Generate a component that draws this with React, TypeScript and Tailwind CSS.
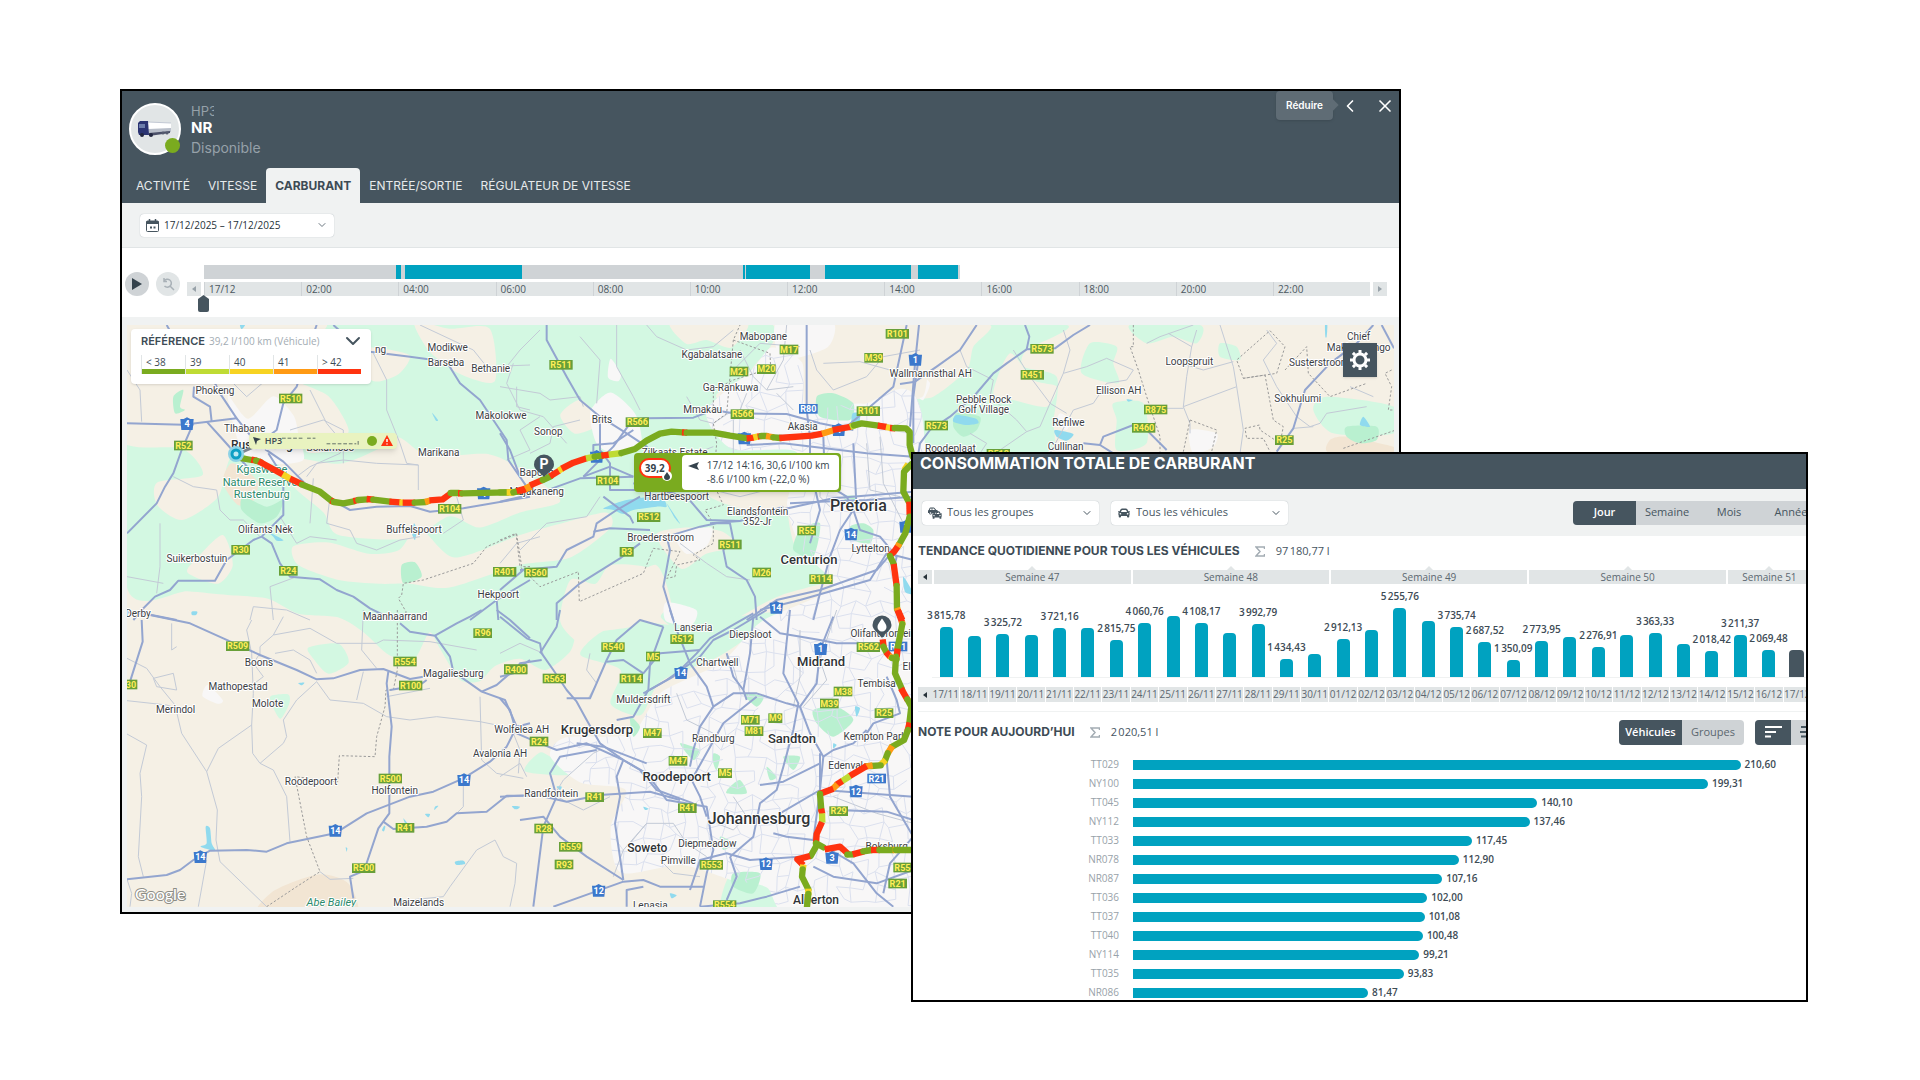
import React from "react";
import { ChevronDown, ChevronLeft, X } from "lucide-react";
import { FaCar, FaCarSide } from "react-icons/fa";

/* ------------------------------------------------------------------ map */

type Pt = string;
type Label = [string, number, number, ("s" | "m" | "l" | "xl" | "park")?];
type Shield = [string, number, number, ("g" | "b" | "n")?];
type Seg = ["g" | "r" | "y" | "o" | "l", Pt];

type Tile = {
  x: number;
  y: number;
  parks: Pt[];
  water: Pt[];
  minor: Pt[];
  border: Pt[];
  major: Pt[];
  route: Seg[];
  labels: Label[];
  shields: Shield[];
};

const routeColor = { g: "#7aab1f", r: "#ff330f", y: "#f7d322", o: "#ff9a14", l: "#bfdb34" };

/* Land cover west of Pretoria, in its own coarse grid. */
const west = {
  place: "translate(127 325) scale(0.5038 0.375)",
  green: [
    "0,100 60,60 200,160 380,30 400,-20 1240,-20 1240,120 1180,200 1580,240 1580,330 1330,340 1330,600 1500,640 1300,720 1200,790 1120,830 1060,780 1080,740 1050,640 980,700 900,800 880,870 830,920 780,890 730,910 700,950 660,945 620,860 600,820 570,890 520,880 470,820 420,780 340,770 280,730 200,720 120,710 0,700",
    "900,880 940,820 1010,790 1090,800 1200,780 1290,770 1180,880 1060,950 1020,1040 960,1010 980,920",
    "1330,950 1400,930 1460,980 1480,1050 1420,1080 1350,1060",
    "820,1140 860,1160 950,1130 960,1170 880,1200 790,1190",
    "1200,1460 1290,1440 1320,1470 1290,1580 1180,1580",
    "285,990 320,985 322,1010 305,1050 290,1020",
    "360,860 420,850 440,900 400,930 370,890",
    "1490,1470 1560,1450 1580,1500 1520,1520",
  ],
  beige: [
    "-20,-20 380,-20 360,60 330,140 400,190 440,280 410,330 360,340 330,290 230,300 200,370 180,460 110,520 60,480 60,420 150,400 110,330 -20,300",
    "300,350 420,370 500,330 540,300 600,350 720,345 800,400 860,470 780,500 700,540 640,510 560,570 420,560 390,500 330,430",
    "330,590 400,580 480,610 540,600 580,540 650,620 780,560 860,530 950,500 960,540 880,620 780,640 640,700 560,690 500,690 420,680 340,640",
    "570,-10 640,10 720,10 730,150 660,130 600,70",
    "1390,30 1470,10 1580,-10 1580,190 1480,150 1440,210 1390,190 1370,120",
    "1080,-10 1230,-10 1200,60 1150,40 1110,50",
    "880,680 930,690 960,640 1040,650 1060,720 1010,740 1010,800 930,820 900,850 860,790",
    "1050,560 1110,540 1180,550 1210,590 1150,610 1100,650",
    "1150,450 1220,410 1310,420 1320,500 1220,490",
    "440,90 480,60 560,80 540,130 490,150",
    "140,620 190,560 210,640 180,690 120,660",
    "860,240 900,200 940,260 890,290",
  ],
  urban: [
    "1240,120 1280,60 1340,100 1350,220 1460,210 1580,260 1580,1580 1320,1580 1270,1500 1200,1480 1100,1440 980,1460 960,1340 990,1240 900,1220 840,1150 870,1100 1000,1090 1060,980 1180,900 1260,790 1400,700 1340,600 1310,480 1330,340 1200,330 1150,230",
    "200,190 240,250 290,190 330,240 340,290 350,360 290,370 230,340",
    "920,230 960,180 1010,240 1020,330 960,340 930,310",
    "1290,-10 1400,-10 1390,60 1300,90",
    "1090,560 1160,540 1150,590 1110,610",
    "1070,740 1130,760 1120,800 1070,790",
    "960,90 980,130 975,150 955,140",
    "160,960 190,1000 180,1010 150,990",
  ],
  tan: ["205,370 230,380 260,420 250,470 220,480 190,420", "260,1580 290,1510 380,1465 440,1490 450,1580"],
};

/* Land cover east of Pretoria. */
const east = {
  place: "translate(900 310) scale(0.3333)",
  green: [
    "60,45 500,45 380,120 370,170 470,200 460,330 430,430 0,430 0,280 100,260 200,180 220,110 270,45",
    "570,100 650,110 640,160 655,220 545,190",
    "640,280 730,280 740,400 650,420 650,330",
    "690,45 900,45 890,100 820,80 740,100",
    "960,100 1010,110 1020,150 960,140",
    "1240,300 1280,260 1482,290 1482,370 1300,370",
  ],
  beige: ["330,130 400,210 470,230 440,290 340,270 280,250", "70,60 200,60 210,110 160,150 100,190 60,160"],
  urban: ["60,200 90,220 70,270 50,250", "870,360 950,370 940,410 880,430", "480,310 510,330 500,360 470,340", "0,100 40,100 30,280 0,280"],
  tan: ["1290,390 1340,380 1480,410 1482,430 1290,430"],
};

/* Each tile is drawn at three units per pixel from its own origin. */
const tiles: Tile[] = [
  {
    x: 110,
    y: 310,
    parks: ["400,560 470,590 520,570 500,620 450,640 395,600", "875,765 915,757 935,800 880,820", "190,260 220,240 210,290 225,300 195,310"],
    water: ["475,665 520,690 500,692 490,680", "912,640 920,660 915,690 906,670", "390,45 405,45 395,58", "966,308 984,330 978,332", "245,905 262,905 258,915 246,915"],
    minor: [
      "330,180 410,260 480,200 520,150 560,220",
      "790,130 830,210 830,300 870,400 890,460 925,465 925,540",
      "51,180 90,240 95,335",
      "190,500 250,530 320,540 330,600 360,630 400,630 450,680",
      "600,240 650,340 700,400 690,430 600,470 560,500",
      "930,45 1090,120 1130,170 1260,165",
      "925,465 800,460 700,450 620,460 590,500",
      "660,560 650,640 720,660 740,700 800,720 870,690 930,680",
      "510,620 560,700 600,680 680,690",
      "150,640 150,770 140,850",
      "560,800 480,830 490,930",
      "1220,230 1220,290 1260,300",
      "1040,560 1060,630 1000,670",
      "420,930 430,890 530,900 600,930",
      "540,360 640,330 700,360 700,460",
      "610,505 600,640",
      "51,800 160,820",
    ],
    border: ["1260,770 1235,770 1220,672 1130,710 1090,760 1030,780 940,810 880,820 875,855 865,865 888,905 885,930"],
    major: [
      "170,45 190,80 215,110",
      "670,45 720,90 780,125 900,140 1010,155",
      "620,45 590,130 560,230 520,280 500,360 460,390 430,410",
      "252,230 250,260 300,290 305,335",
      "51,340 220,344 380,325 330,250 310,210",
      "290,335 340,390 420,480",
      "380,325 440,400 520,455 585,520 665,570 720,600 800,590 900,588 960,605 1060,595 1260,560",
      "475,430 520,500 520,615 455,680 430,690 390,720 350,750 315,812 205,812 180,840 135,860 95,900 70,930",
      "250,340 215,420 190,490 165,530 140,580 51,670",
      "455,680 485,700 510,760 540,800 630,808 680,840 730,860 780,895 850,930",
      "1010,155 1050,220 1110,270 1150,330 1190,390 1195,450 1250,530",
      "1260,810 1160,870 1080,930",
      "1160,870 1165,930",
      "51,907 110,912 200,930",
    ],
    route: [
      ["g", "385,443 425,450"], ["r", "424,449 440,452"], ["g", "438,452 452,456"], ["r", "446,454 520,494"], ["y", "518,493 542,507"],
      ["r", "540,506 578,524"], ["g", "576,524 630,545 665,573"], ["r", "662,571 672,576"], ["g", "672,576 700,580 732,574"], ["r", "730,573 746,570"],
      ["g", "745,570 772,568"], ["r", "770,567 792,569"], ["g", "790,569 840,575"], ["r", "838,575 872,577"], ["y", "868,577 880,578"], ["r", "878,578 916,578"],
      ["g", "914,578 948,576"], ["o", "945,576 960,572"], ["r", "958,571 998,568 1024,549"], ["g", "1022,549 1046,549"], ["r", "1044,550 1058,550"],
      ["g", "1057,550 1192,547"], ["y", "1190,547 1207,547"], ["g", "1205,547 1226,544"], ["r", "1224,544 1246,538"], ["o", "1245,538 1264,530"],
    ],
    labels: [
      ["ng", 812, 130], ["Modikwe", 1013, 122], ["Barseba", 1008, 168], ["Bethanie", 1142, 187], ["Phokeng", 315, 251], ["Tlhabane", 404, 366],
      ["Makolokwe", 1173, 328], ["Rustenburg", 456, 418, "m"], ["Bokamoso", 661, 422], ["Marikana", 986, 438], ["Kgaswane", 456, 490, "park"],
      ["Nature Reserve", 450, 527, "park"], ["Rustenburg", 455, 563, "park"], ["Olifants Nek", 466, 670], ["Buffelspoort", 912, 670],
      ["Suikerbostuin", 261, 757], ["Hekpoort", 1165, 863], ["Maanhaarrand", 855, 929], ["Derby", 84, 922],
    ],
    shields: [["R510", 542, 266], ["R52", 220, 407], ["4", 231, 342, "n"], ["R104", 1019, 597], ["R30", 392, 720], ["R24", 535, 783], ["R401", 1184, 786], ["4", 1121, 550, "n"]],
  },
  {
    x: 500,
    y: 310,
    parks: ["1090,640 1120,660 1110,700 1060,690 1050,650", "900,660 960,640 940,740 880,720", "1030,560 1070,560 1060,600", "950,260 1000,250 1060,280 1050,330 960,320"],
    water: ["310,595 380,570 480,560 500,590 470,590 400,600 370,612 340,600", "500,580 540,640 525,625", "1058,310 1080,312 1075,350 1055,340", "1210,800 1240,850 1215,845"],
    minor: [
      "0,230 60,240 120,250 150,270 240,260 250,290", "40,160 20,220 60,300 130,320 200,400", "350,45 350,170 400,260 420,300", "240,80 300,150 290,280",
      "440,45 470,80 560,120 640,110 700,60", "930,120 950,180 1000,240 1100,200 1150,140 1260,120", "970,160 1080,155 1170,180",
      "560,260 600,330 640,340 700,300", "830,250 880,300", "120,60 60,120 20,170", "300,560 260,620 140,640 60,720", "0,760 50,700 120,680",
      "640,540 720,560 880,520", "540,700 620,760 680,800 750,810", "700,330 700,430 640,470", "860,45 850,150 800,240", "600,560 570,500 560,440 640,410",
      "120,320 60,360 90,420 20,450", "240,330 160,350 150,400 90,430", "720,120 760,200 800,240 880,230", "700,180 780,100 900,110", "740,250 720,300",
      "960,440 960,560 1000,600", "1100,400 1110,540 1200,560", "1140,380 1150,520 1210,640",
    ],
    border: [
      "0,690 48,670 60,770 120,830 235,785 238,875 430,790 460,715 540,725 500,805 525,800 530,765 600,750 580,735 640,700 640,640 615,600 670,585 640,520 650,400 640,340 680,310 700,90 720,45",
      "700,90 810,130 812,175 700,210 640,240 640,310",
    ],
    major: [
      "140,45 140,90 200,200 240,270 300,320 380,370 440,410 560,530",
      "300,320 300,420 330,460 330,540 420,540",
      "250,500 340,410 390,340 430,325 580,323 640,300 700,310 860,312 960,340 1060,360",
      "920,45 920,300 930,380 930,470 960,600 930,700",
      "1220,45 1180,230 1110,290 1040,350 1000,370",
      "1255,150 1240,260 1240,400",
      "0,575 130,545 240,505 400,500",
      "280,430 280,405 340,400 400,360",
      "400,520 560,560 620,630 720,633",
      "740,405 850,400 1100,430 1240,440",
      "420,560 350,600 290,640 280,680 200,720 170,770 60,780",
      "0,840 70,780",
      "870,580 960,575 1100,570 1240,560",
      "850,598 1000,565 1240,545",
      "630,640 720,633 850,590",
      "520,930 490,830 510,720 500,680 600,650 650,640 690,640 700,690 670,720 680,770 740,810 765,860 770,930",
      "1060,600 1020,660 990,740 960,850 940,930",
      "1060,600 1080,660 1140,680 1190,740 1180,780",
      "1060,400 1070,600",
      "1235,600 1200,700 1130,780 960,840 830,870 740,930",
      "170,930 170,880 240,820 360,745 420,700",
      "0,370 30,420 60,500",
      "1240,750 1160,730 1110,810 900,870 780,900",
      "310,560 390,620 400,640",
      "450,660 330,655 280,665",
      "970,380 975,520 1040,560 1060,600",
      "400,500 330,470 250,500",
    ],
    route: [
      ["g", "0,547 25,547"], ["y", "20,547 42,547"], ["g", "40,547 52,545"], ["r", "50,543 78,536"], ["o", "76,536 92,527"], ["r", "90,526 130,509"], ["g", "128,510 152,499"],
      ["r", "150,499 178,482"], ["y", "176,482 188,475"], ["r", "185,476 220,458 260,445"], ["l", "258,445 285,440"], ["g", "284,440 306,437"], ["r", "304,437 328,434"],
      ["l", "326,434 366,429"], ["g", "364,429 405,417 440,392 480,371 515,365 548,367"], ["r", "546,367 562,368"], ["g", "560,368 640,368 690,377 742,385"], ["r", "740,385 762,383"],
      ["y", "760,383 775,379"], ["r", "773,380 785,378"], ["g", "784,378 800,378"], ["o", "798,378 822,382"], ["g", "820,382 842,384"], ["r", "838,384 935,377 968,371"], ["o", "966,371 1000,361"],
      ["r", "998,360 1055,350"], ["l", "1050,351 1066,345"], ["g", "1062,346 1085,340 1135,347"], ["r", "1133,347 1160,351"], ["y", "1158,351 1172,354"], ["r", "1170,354 1186,355"],
      ["g", "1184,354 1218,355 1229,366 1229,405 1238,440"], ["y", "1225,462 1213,480"], ["g", "1235,462 1212,485 1210,545 1226,575"], ["r", "1228,575 1229,615"], ["g", "1229,620 1216,670 1196,706"],
      ["o", "1198,700 1192,712"], ["r", "1193,710 1183,724 1168,738"], ["g", "1170,738 1181,762"], ["r", "1181,762 1190,828"], ["g", "1190,828 1191,897"], ["o", "1191,893 1195,905"], ["r", "1194,902 1207,930"],
    ],
    labels: [
      ["Mabopane", 790, 91], ["Kgabalatsane", 636, 143], ["Ga-Rankuwa", 692, 243], ["Mmakau", 608, 310], ["Brits", 306, 338], ["Sonop", 145, 375], ["Akasia", 908, 361],
      ["Zilkaats Estate", 524, 439], ["Bapong", 110, 498], ["Majakaneng", 110, 556], ["Hartbeespoort", 530, 570], ["Elandsfontein", 773, 614], ["352-Jr", 772, 645],
      ["Broederstroom", 482, 693], ["Pretoria", 1075, 604, "xl"], ["Centurion", 927, 763, "l"], ["Lyttelton", 1112, 727],
    ],
    shields: [
      ["R101", 1192, 72], ["R511", 183, 165], ["M17", 867, 119], ["M39", 1121, 144], ["M21", 717, 185], ["M20", 799, 178], ["R566", 727, 313], ["R566", 412, 337], ["R80", 925, 297, "b"], ["R101", 1105, 304],
      ["R104", 323, 512], ["R512", 446, 622], ["R55", 920, 662], ["R511", 690, 704], ["R3", 380, 726], ["R560", 108, 788], ["M26", 785, 788], ["R114", 963, 808], ["14", 1053, 673, "n"], ["14", 829, 893, "n"],
      ["4", 733, 385, "n"], ["4", 290, 440, "n"], ["1", 1218, 650, "n"], ["4", 1016, 360, "n"],
    ],
  },
  {
    x: 110,
    y: 610,
    parks: [],
    water: ["287,650 300,655 305,700 315,722 272,710 290,700", "1035,755 1060,752 1065,762 1040,765", "945,612 960,612 955,622", "1206,588 1226,590 1215,598", "822,648 826,650 822,664 816,660", "565,220 583,218 575,226", "975,590 985,588 973,600", "880,625 892,640 886,642", "707,712 712,715 710,725"],
    minor: [
      "51,145 110,175 150,230 195,285 215,370 290,485 322,600 318,690 330,755 470,890", "290,485 325,415 425,345 430,250 425,130 410,60 425,30", "425,345 428,430 450,460 490,480 530,560 540,695",
      "450,460 520,400 530,380 520,330 560,270 620,215", "51,272 170,285 215,300", "185,40 185,120 200,110", "51,372 110,405 90,490 95,560 85,740 100,800", "51,808 65,850 60,890", "290,750 265,890",
      "450,140 450,110 490,75 520,20", "490,75 600,55 680,100 800,100 820,90 960,95 1100,120", "760,0 755,120 800,175", "620,215 660,270 760,280 830,320 900,330 980,320 1110,335 1210,355",
      "760,185 740,270", "830,260 960,235", "495,130 550,120 600,150 620,190", "1110,260 1115,450 1160,490 1240,505", "1210,370 1230,420 1225,490", "1060,520 1060,590 1040,610", "1155,690 1180,740 1220,760 1215,820 1200,890", "1155,690 1100,720 1020,830 1000,860 900,870", "630,785 660,808 730,805",
      "130,205 190,190 200,240 140,230 130,205", "450,130 430,160 460,200 420,230",
    ],
    border: ["862,0 862,180 850,240 828,240 825,290 800,380 795,440 688,437 683,515 555,500 590,680 630,785 560,830 470,890"],
    major: [
      "120,15 240,40 340,85 450,135 560,180 620,208 670,205 750,180 820,177 900,207 940,200", "95,30 98,95 60,215", "835,185 830,220 845,350 838,440 838,610 805,655 768,765", "768,780 720,800 730,865",
      "840,240 930,225 950,210", "870,40 900,65 975,77 1020,140 1030,185 1115,245 1185,270 1220,350", "975,77 1040,40 1080,20 1115,0", "1160,0 1200,30 1260,85", "1115,245 1160,225 1200,190 1260,150",
      "1220,350 1190,410 1140,455 1060,505 970,545 900,560 770,610 675,670 530,700 470,725 410,720 300,722 250,750 210,780 170,795 51,808",
      "820,635 850,657 950,650 1010,635 1040,610 1130,605 1190,557 1240,557", "1220,350 1260,340",
    ],
    route: [],
    labels: [
      ["Boons", 447, 169], ["Mathopestad", 384, 241], ["Molote", 473, 290], ["Merindol", 197, 310], ["Magaliesburg", 1030, 200], ["Roodepoort", 603, 524], ["Holfontein", 854, 552],
      ["Avalonia AH", 1170, 442], ["Abe Bailey", 664, 888, "park"], ["Maizelands", 926, 889],
    ],
    shields: [["R509", 383, 109], ["R96", 1118, 70], ["R554", 885, 155], ["R400", 1217, 178], ["R100", 902, 227], ["R500", 841, 506], ["R41", 885, 654], ["R500", 761, 775], ["R30", 54, 224], ["14", 1062, 510, "n"], ["14", 676, 662, "n"], ["14", 271, 741, "n"]],
  },
  {
    x: 500,
    y: 610,
    parks: ["700,790 780,790 760,850 700,830", "940,300 1010,290 1060,330 1000,380 950,340", "640,430 660,440 650,480 640,460", "850,440 900,440 880,480", "690,530 720,510 740,550 680,550", "800,470 830,500 810,510", "540,400 600,420 580,450", "390,320 420,350 400,380", "660,680 700,700 670,720", "730,250 790,260 770,290"],
    water: ["1065,290 1080,295 1070,320", "430,590 446,596 436,600", "510,850 530,856 515,865", "40,588 60,590 50,598", "1000,400 1010,405 1000,415", "170,530 185,530 180,540"],
    minor: [
      "0,130 60,100 130,130", "270,130 260,180 290,220 265,265", "80,500 60,460 0,500", "160,560 190,510 280,430 300,420", "530,250 560,330 640,370", "720,240 700,170 680,130", "900,60 900,200 880,290",
      "1010,0 960,150 980,210 910,290", "330,560 250,600 170,560", "600,760 570,840", "440,640 370,720 340,800", "1000,560 1130,610 1240,640",
      "390,700 440,640 520,640 560,700 620,740", "480,750 520,790 600,800", "700,560 740,620 700,660 650,640",
    ],
    border: [],
    major: [
      "0,20 80,85 120,100 125,130 160,180 200,240 230,275 260,330 300,400 370,450 440,490 500,570 620,590 640,720 620,790 600,890",
      "180,0 170,50 120,130", "0,200 40,190 60,160 125,150", "0,265 30,300 50,370", "510,0 530,60 570,160 620,230 640,290 600,350 580,420 570,470",
      "490,50 420,30 350,90 320,150 270,265 200,265", "490,50 450,160 445,240 400,320 350,330", "370,450 350,500 360,560 345,640 370,810", "320,155 370,150 430,190 480,130 600,120",
      "800,0 700,60 640,90 600,140 500,210 440,245", "760,10 690,50 630,85 590,130 520,200 430,250", "570,500 600,560 620,620", "640,290 700,250 770,250 860,280 900,290 950,220 960,120 1000,20",
      "870,0 850,190 895,280 880,360 850,470 830,540 780,580 760,680 690,740", "960,430 960,540 940,690", "900,290 930,370 970,440 960,540 840,610",
      "580,500 670,340 770,260", "50,370 120,400 170,420 260,400 370,450 420,480 470,540 580,580", "230,400 310,410 440,460", "0,560 110,555 200,575 300,555 450,545 540,570", "160,890 370,815 430,810 480,830 610,830",
      "380,890 380,840 430,830", "570,840 600,750 680,730 750,750 900,740", "690,740 710,800 680,870", "100,890 130,650 170,560 150,490 180,440 290,420", "60,630 130,620 180,680 260,740 370,810",
      "940,690 1060,760 1130,850 1180,890", "820,670 860,680 940,690", "1160,450 1170,560 1240,680 1170,760 1150,850", "1000,600 1160,605 1240,630", "970,540 1100,550 1240,560",
      "1100,370 1120,340 1200,310 1190,270 1160,200", "780,20 840,70 960,90 1010,100 1140,100", "970,440 1000,420 1060,400 1100,360", "780,525 850,515 960,460", "940,770 1000,800 1130,820 1240,780",
      "600,890 720,880 800,860 900,830", "680,130 700,200 730,240 740,270", "760,20 750,130 730,240",
    ],
    route: [
      ["r", "1193,0 1206,36"], ["o", "1206,34 1207,46"], ["g", "1207,42 1192,118"], ["r", "1193,116 1190,142"], ["g", "1188,140 1185,190 1206,238"], ["r", "1203,235 1224,272"], ["g", "1222,268 1234,290 1228,340"],
      ["r", "1229,338 1222,365"], ["g", "1224,360 1212,390 1176,410"], ["o", "1177,408 1162,432"], ["g", "1163,430 1155,452"], ["y", "1157,450 1140,466"], ["g", "1142,466 1112,468"], ["o", "1118,466 1095,470"],
      ["r", "1100,468 1048,499"], ["l", "1050,498 1024,515"], ["r", "1027,513 1008,525"], ["o", "1012,523 998,537"], ["r", "1000,536 958,552"], ["g", "960,552 964,600"], ["r", "963,596 967,612"], ["l", "966,610 967,638"],
      ["r", "966,636 950,672 948,700"], ["g", "948,700 970,712"], ["r", "974,718 1020,710 1048,735"], ["g", "1042,734 1060,733"], ["r", "1058,733 1092,724"], ["g", "1090,724 1115,720"], ["r", "1113,720 1140,720"],
      ["g", "1138,720 1180,720"], ["o", "1178,720 1190,720"], ["g", "1188,720 1240,720"], ["g", "950,706 932,738"], ["r", "930,738 892,748 910,766"], ["y", "910,764 908,780"], ["g", "908,778 906,800 925,838"],
      ["y", "925,836 925,856"], ["g", "925,852 921,890"], ["r", "1148,88 1151,112"], ["g", "1150,110 1160,128"], ["r", "1158,126 1170,140"], ["o", "1167,138 1180,145"], ["g", "1176,144 1190,148"],
    ],
    labels: [
      ["Lanseria", 580, 63], ["Diepsloot", 751, 83], ["Chartwell", 652, 168], ["Olifantsfontein", 1150, 81], ["Midrand", 963, 169, "l"], ["Muldersdrift", 430, 279], ["Tembisa", 1130, 230], ["Wolfelea AH", 65, 369],
      ["Krugersdorp", 291, 373, "l"], ["Randburg", 640, 396], ["Sandton", 876, 398, "l"], ["Kempton Park", 1125, 390], ["Roodepoort", 530, 514, "l"], ["Edenvale", 1045, 477], ["Randfontein", 154, 560],
      ["Johannesburg", 777, 642, "xl"], ["Soweto", 442, 727, "m"], ["Diepmeadow", 622, 712], ["Pimville", 535, 763], ["Boksburg", 1160, 720], ["Lenasia", 451, 896], ["Alberton", 948, 882, "m"], ["El", 1220, 181],
    ],
    shields: [
      ["R512", 546, 88], ["R540", 339, 112], ["M5", 459, 140], ["R400", 47, 179], ["R563", 163, 206], ["R114", 394, 206], ["R562", 1105, 112], ["R21", 1194, 110, "b"], ["M38", 1029, 245], ["M39", 988, 281], ["R25", 1152, 310],
      ["M71", 751, 330], ["M9", 826, 325], ["M81", 762, 364], ["M47", 457, 370], ["R24", 117, 395], ["M47", 534, 453], ["M5", 675, 490], ["R21", 1130, 506, "b"], ["R41", 284, 562], ["R41", 562, 595], ["R29", 1016, 604],
      ["R28", 131, 656], ["R559", 212, 711], ["R93", 192, 764], ["R553", 634, 765], ["R554", 1215, 773], ["R21", 1193, 821], ["R554", 674, 886], ["14", 543, 189, "n"], ["1", 962, 117, "n"], ["12", 1068, 544, "n"],
      ["3", 996, 743, "n"], ["12", 798, 762, "n"], ["12", 296, 842, "n"],
    ],
  },
  {
    x: 900,
    y: 310,
    parks: ["170,310 240,320 230,360 190,380 160,350", "1340,350 1430,350 1430,390 1380,400 1340,380"],
    water: ["170,315 225,325 235,340 200,345 160,335", "465,360 520,372 500,392 470,380", "1275,45 1282,45 1280,80 1276,80", "1390,320 1410,350 1380,345", "680,268 698,270 685,275"],
    minor: [
      "340,120 390,200 450,280 420,350 380,365", "490,60 510,120 490,190 450,280", "490,190 560,170 620,145 700,180 680,210 620,220 580,280 520,300 450,430", "450,280 500,310", "805,70 875,110 890,60", "875,110 860,200 850,290 870,340 870,370",
      "960,45 1000,170 1010,230 850,290", "1010,230 1030,360 1020,430", "860,165 910,180 1000,155", "180,120 200,170 280,210 270,260 350,330 380,365 300,420", "800,295 850,295", "740,100 780,80 880,45",
      "1100,60 1130,100 1090,150 1130,230 1190,320 1230,350 1260,340 1280,310 1400,290", "1350,230 1420,260", "1180,355 1240,350", "210,370 260,400 240,430",
    ],
    border: [
      "700,45 700,110 690,110 715,180 740,260 780,380 780,425", "1110,62 1155,110 1130,190 1030,205 1010,150 1110,62", "1030,205 1095,195 1120,330 1150,350 1140,400 1080,360 1078,345 1035,355 1040,385 1090,385 1110,425", "1155,180 1220,110 1225,190 1290,260 1400,220", "1475,180 1455,190 1475,230 1465,300 1482,300",
      "870,330 950,360 935,425", "870,330 850,425", "1330,415 1482,362",
    ],
    major: [
      "57,45 45,160 30,350", "230,45 180,120 110,170 45,215 0,222", "570,45 520,75 465,115 380,118 320,160 280,190 225,255 150,320 90,360 60,400 55,430", "375,45 388,80 380,118", "1445,45 1482,115", "1420,45 1370,100 1290,160 1215,240 1180,355 1130,425",
      "700,345 610,380 600,405 640,430", "730,350 800,420", "550,400 600,405",
    ],
    route: [],
    labels: [
      ["Wallmannsthal AH", 92, 202], ["Loopspruit", 868, 166], ["Ellison AH", 656, 253], ["Pebble Rock", 251, 279], ["Golf Village", 251, 309], ["Refilwe", 505, 349], ["Cullinan", 497, 421], ["Roodeplaat", 151, 426],
      ["Chief", 1376, 91], ["Makhosonngo", 1376, 123], ["Susterstroom", 1258, 168], ["Sokhulumi", 1193, 277],
    ],
    shields: [["R573", 426, 117], ["R451", 397, 195], ["R875", 767, 299], ["R460", 731, 354], ["R573", 109, 347], ["R25", 1153, 391], ["R513", 295, 432], ["1", 46, 149, "n"]],
  },
];

const labelStyle = {
  s: { size: 30, weight: 400, fill: "#3c4043" },
  m: { size: 36, weight: 500, fill: "#2f3336" },
  l: { size: 39, weight: 500, fill: "#2f3336" },
  xl: { size: 48, weight: 500, fill: "#2f3336" },
  park: { size: 33, weight: 400, fill: "#2b8a6b" },
};

/* Fine street mesh that fills the built-up areas. */
function streetMesh(): string[] {
  let seed = 7;
  const rnd = () => {
    seed = (seed * 16807) % 2147483647;
    return seed / 2147483647;
  };
  const cols = 29;
  const rows = 45;
  const p: number[][][] = [];
  for (let r = 0; r < rows; r++) {
    p.push([]);
    for (let c = 0; c < cols; c++) p[r].push([550 + c * 13 + rnd() * 10, 325 + r * 13 + rnd() * 10]);
  }
  const out: string[] = [];
  const line = (a: number[], b: number[]) => out.push(`${a[0].toFixed(1)},${a[1].toFixed(1)} ${b[0].toFixed(1)},${b[1].toFixed(1)}`);
  for (let r = 0; r < rows; r++)
    for (let c = 0; c < cols; c++) {
      if (c + 1 < cols && rnd() < 0.72) line(p[r][c], p[r][c + 1]);
      if (r + 1 < rows && rnd() < 0.72) line(p[r][c], p[r + 1][c]);
    }
  return out;
}
const mesh = streetMesh();

/* Closed curve that runs through every listed point. */
function smooth(pts: string): string {
  const a = pts.split(" ").map((s) => s.split(",").map(Number));
  const n = a.length;
  const at = (i: number) => a[(i + n) % n];
  let d = `M${a[0][0]} ${a[0][1]}`;
  for (let i = 0; i < n; i++) {
    const [p0, p1, p2, p3] = [at(i - 1), at(i), at(i + 1), at(i + 2)];
    const k = 8;
    d += `C${p1[0] + (p2[0] - p0[0]) / k} ${p1[1] + (p2[1] - p0[1]) / k} ${p2[0] - (p3[0] - p1[0]) / k} ${p2[1] - (p3[1] - p1[1]) / k} ${p2[0]} ${p2[1]}`;
  }
  return d + "Z";
}

function Layer({ draw }: { draw: (t: Tile) => React.ReactNode }) {
  return (
    <>
      {tiles.map((t, i) => (
        <g key={i} transform={`translate(${t.x} ${t.y}) scale(${1 / 3})`}>{draw(t)}</g>
      ))}
    </>
  );
}

const areas = (list: Pt[], fill: string) => list.map((d, i) => <path key={fill + i} d={smooth(d)} fill={fill} />);
const lines = (list: Pt[], stroke: string, w: number, dash?: string) =>
  list.map((d, i) => <polyline key={stroke + i} points={d} fill="none" stroke={stroke} strokeWidth={w} strokeDasharray={dash} strokeLinejoin="round" />);

function ShieldMark({ s }: { s: Shield }) {
  const [text, x, y, kind = "g"] = s;
  if (kind === "n")
    return (
      <g>
        <path d={`M${x} ${y - 20}L${x + 10} ${y - 15}H${x + 20}L${x + 17} ${y + 18}H${x - 17}L${x - 20} ${y - 15}H${x - 10}Z`} fill="#3b78cc" />
        <text x={x} y={y + 10} fontSize={27} fontWeight={700} fill="#fff" textAnchor="middle">{text}</text>
      </g>
    );
  const w = text.length * 14 + 14;
  return (
    <g>
      <rect x={x - w / 2} y={y - 15} width={w} height={29} fill={kind === "g" ? "#689f38" : "#3b78cc"} />
      <text x={x} y={y + 9} fontSize={27} fontWeight={700} fill={kind === "g" ? "#ffee58" : "#fff"} textAnchor="middle">{text}</text>
    </g>
  );
}

function MapDrawing() {
  return (
    <svg viewBox="127 325 1267 582" className="block h-auto w-full font-['Roboto',sans-serif]" role="img" aria-label="Carte du trajet">
      <defs>
        <clipPath id="builtUp">
          <path d={smooth(west.urban[0])} transform={west.place} />
        </clipPath>
      </defs>
      <rect x="127" y="325" width="1267" height="582" fill="#f5f0e5" />
      {[east, west].map((land) => (
        <g key={land.place} transform={land.place}>
          {areas(land.green, "#d3f8e2")}
          {areas(land.beige, "#f5f0e5")}
          {areas(land.urban, "#f8f7f7")}
          {areas(land.tan, "#f2e5d3")}
        </g>
      ))}
      <Layer draw={(t) => areas(t.parks, "#b9f0d0")} />
      <g clipPath="url(#builtUp)">{lines(mesh, "#dbe0ee", 1)}</g>
      <Layer draw={(t) => areas(t.water, "#90daee")} />
      <Layer draw={(t) => lines(t.minor, "#c3cad6", 3)} />
      <Layer draw={(t) => lines(t.border, "#9a9a9a", 3, "7 6")} />
      <Layer draw={(t) => lines(t.major, "#93a5cf", 6)} />
      <Layer draw={(t) => t.shields.map((s, i) => <ShieldMark key={i} s={s} />)} />
      <Layer
        draw={(t) =>
          t.labels.map(([text, x, y, k = "s"], i) => (
            <text key={i} x={x} y={y} textAnchor="middle" fontSize={labelStyle[k].size} fontWeight={labelStyle[k].weight} fontStyle={text === "Abe Bailey" ? "italic" : undefined} fill={labelStyle[k].fill} stroke="#fff" strokeWidth={6} strokeLinejoin="round" paintOrder="stroke">
              {text}
            </text>
          ))
        }
      />
      <Layer draw={(t) => t.route.map(([c, d], i) => <polyline key={i} points={d} fill="none" stroke={routeColor[c]} strokeWidth={19} strokeLinejoin="round" strokeLinecap={c === "g" ? "round" : "butt"} />)} />

      {/* start of the trip */}
      <path d="M238 454 262 443" stroke="#7b8790" strokeWidth="3" />
      <circle cx="236" cy="454" r="8" fill="#8fd3e6" />
      <circle cx="236" cy="454" r="4" fill="#bfe9f3" stroke="#0f9fc4" strokeWidth="3" />

      {/* parking stop */}
      <path d="M544 477C540 472 534 470 534 464.500A10 10 0 0 1 554 464.500C554 470 548 472 544 477Z" fill="#46555f" />
      <text x="544" y="469" fontSize="14" fontWeight="700" fill="#fff" textAnchor="middle">P</text>

      {/* fuel stop */}
      <path d="M882 638C878 632 872.500 630 872.500 625A9.500 9.500 0 0 1 891.500 625C891.500 630 886 632 882 638Z" fill="#46555f" />
      <path d="M882 618.500C884.500 622 886.500 624.500 886.500 627A4.500 4.500 0 0 1 877.500 627C877.500 624.500 879.500 622 882 618.500Z" fill="#fff" />

      <text x="135" y="900" fontSize="16" fontWeight="500" fill="#fff" stroke="#8d8d86" strokeWidth="2" paintOrder="stroke" className="font-['Lato',sans-serif]">Google</text>
    </svg>
  );
}

/* -------------------------------------------------------- vehicle window */

const dayTicks = ["17/12", "02:00", "04:00", "06:00", "08:00", "10:00", "12:00", "14:00", "16:00", "18:00", "20:00", "22:00"];
const drives = [[16.5, 0.4], [17.2, 10.1], [46.2, 0.2], [46.5, 5.5], [53.3, 7.3], [61.2, 3.5]];
const scale = [
  { label: "< 38", color: "bg-[#7aab1f]" },
  { label: "39", color: "bg-[#bfdb34]" },
  { label: "40", color: "bg-[#f7d322]" },
  { label: "41", color: "bg-[#ff9a14]" },
  { label: "> 42", color: "bg-[#ff330f]" },
];
const tabs = ["ACTIVITÉ", "VITESSE", "CARBURANT", "ENTRÉE/SORTIE", "RÉGULATEUR DE VITESSE"];

function Truck() {
  return (
    <svg viewBox="0 0 36 18" className="w-9">
      <path d="M11 2 34 3V12L11 14Z" fill="#fff" />
      <path d="M11 9 34 8V12L11 14Z" fill="#b9bfca" />
      <path d="M11 2 34 3" stroke="#c3c9d4" />
      <path d="M1 3 3 1H11L12 15H2L1 12Z" fill="#2b3472" />
      <path d="M2 4H8V8H2Z" fill="#6c7dab" />
      <path d="M12 13 33 11V13L12 16Z" fill="#4b5068" />
      <circle cx="5" cy="15" r="2" fill="#22263f" />
      <circle cx="14" cy="15" r="2" fill="#22263f" />
      <circle cx="26" cy="13" r="1.500" fill="#555a6e" />
      <circle cx="30" cy="13" r="1.500" fill="#555a6e" />
    </svg>
  );
}

function CalendarIcon() {
  return (
    <svg viewBox="0 0 13 13" className="mr-[5px] size-[13px]" fill="none" stroke="#46555f">
      <rect x="0.500" y="2" width="12" height="10.500" rx="1" />
      <path d="M0.500 3.500H12.500" strokeWidth="3" />
      <path d="M3.500 0V3M9.500 0V3" strokeWidth="1.500" />
      <path d="M4 8.500H6M7.500 8.500H9.500" strokeWidth="2" />
    </svg>
  );
}

function GearIcon() {
  return (
    <svg viewBox="0 0 22 22" className="size-[22px]" fill="none" stroke="#fff">
      <circle cx="11" cy="11" r="6" strokeWidth="3" />
      <path d="M11 1V4M11 18V21M1 11H4M18 11H21M3.900 3.900 6 6M16 16 18.100 18.100M18.100 3.900 16 6M6 16 3.900 18.100" strokeWidth="3" />
    </svg>
  );
}

function VehicleWindow() {
  return (
    <section className="mr-[519px] ml-[120px] border-2 border-black bg-white">
      <header className="bg-[#46555f]">
        <div className="flex items-start">
          <div className="relative mt-3 ml-[7px] flex size-[52px] items-center justify-center rounded-full border-2 border-white bg-[#e1e5e6]">
            <Truck />
            <span className="absolute -right-px bottom-0 size-[15px] rounded-full bg-[#7aab1f]" />
          </div>
          <div className="mt-3 ml-2.5 text-[13px] text-[#96a1a9]">
            <p className="w-[23px] overflow-hidden leading-4 whitespace-nowrap">HP3</p>
            <h1 className="text-[15px] leading-[18px] font-bold text-white">NR</h1>
            <p className="text-sm leading-[22px]">Disponible</p>
          </div>
          <div className="ml-auto flex items-center pr-1 text-white">
            <span role="tooltip" className="relative rounded-sm bg-[#5f6c75] px-2.5 text-[10px] leading-[29px] font-semibold shadow">
              Réduire
              <span className="absolute top-2.5 -right-1 size-2 rotate-45 bg-[#5f6c75]" />
            </span>
            <button aria-label="Réduire" className="ml-[7px]"><ChevronLeft className="size-5" /></button>
            <button aria-label="Fermer" className="ml-[15px]"><X className="size-5" /></button>
          </div>
        </div>
        <nav className="mt-[9px] flex pl-[5px]">
          {tabs.map((t) =>
            t === "CARBURANT" ? (
              <button key={t} className="h-[35px] rounded-t bg-[#f0f2f2] px-[9px] text-xs font-bold text-[#3d4b55]">{t}</button>
            ) : (
              <button key={t} className="h-[35px] px-[9px] text-xs text-[#e7eaec]">{t}</button>
            )
          )}
        </nav>
      </header>

      <div className="flex h-[45px] items-center border-b border-[#e1e5e6] bg-[#f0f2f2] pl-[18px] font-['Open_Sans',sans-serif]">
        <button aria-haspopup="dialog" className="flex h-[23px] w-[194px] items-center rounded-sm bg-white px-1.5 text-[10px] text-[#27323a] shadow-[0_0_1px_#9aa5ad]">
          <CalendarIcon />
          17/12/2025 – 17/12/2025
          <ChevronDown className="ml-auto size-3 text-[#6b7780]" />
        </button>
      </div>

      <div className="flex h-[69px] items-start pl-[3px] font-['Open_Sans',sans-serif]">
        <button aria-label="Lecture" className="mt-6 flex size-6 items-center justify-center rounded-full bg-[#cfd3d6]">
          <svg viewBox="0 0 10 12" className="h-3 w-2.5"><path d="M0 0 10 6 0 12Z" fill="#35434d" /></svg>
        </button>
        <button aria-label="Réinitialiser le zoom" className="mt-6 ml-[7px] flex size-6 items-center justify-center rounded-full bg-[#e1e5e6]">
          <svg viewBox="0 0 14 14" className="size-3.5" fill="none" stroke="#a9b1b7" strokeWidth="1.500"><path d="M3.500 9A4 4 0 1 0 3 4M3 1V4.500H6M9.500 9.500 13 13" /></svg>
        </button>
        <button aria-label="Précédent" className="mt-[34px] ml-[7px] flex h-3.5 w-3.5 items-center justify-center bg-[#e1e5e6]">
          <svg viewBox="0 0 4 6" className="h-1.5 w-1"><path d="M4 0 0 3 4 6Z" fill="#98a2a9" /></svg>
        </button>
        <div className="relative mx-[3px] min-w-0 flex-1 pt-[17px]">
          <div className="relative h-3.5">
            <div className="h-full w-[64.800%] bg-[#cfd3d6]" />
            {drives.map(([l, w]) => (
              <span key={l} className="absolute top-0 h-full bg-[#00a2c0]" style={{ left: `${l}%`, width: `${w}%` }} />
            ))}
          </div>
          <div className="mt-[3px] flex bg-[#e1e5e6] text-[10px] leading-3.5 text-[#4b5861]">
            {dayTicks.map((t) => (
              <span key={t} className="flex-1 border-l border-[#cfd3d6] pl-1">{t}</span>
            ))}
          </div>
          <svg viewBox="0 0 11 17" className="absolute top-[47px] -left-1.5 h-[17px] w-[11px]"><path d="M5.500 0 11 4V15Q11 17 9 17H2Q0 17 0 15V4Z" fill="#46555f" /></svg>
        </div>
        <button aria-label="Suivant" className="mt-[34px] mr-3 flex h-3.5 w-3.5 items-center justify-center bg-[#e1e5e6]">
          <svg viewBox="0 0 4 6" className="h-1.5 w-1"><path d="M0 0 4 3 0 6Z" fill="#98a2a9" /></svg>
        </button>
      </div>

      <div className="bg-[#f0f2f2] px-[5px] pt-2 pb-[5px] font-['Open_Sans',sans-serif]">
        <div className="relative">
          <MapDrawing />

          <div className="absolute top-1 left-1 w-[240px] rounded-sm bg-white px-2.5 pt-1 pb-2.5 shadow">
            <div className="flex h-4 items-center text-[10px] whitespace-nowrap">
              <h2 className="font-['Inter',sans-serif] text-[11px] font-semibold text-[#3d4b55]">RÉFÉRENCE</h2>
              <span className="ml-1 text-[#a3acb3]">39,2 l/100 km (Véhicule)</span>
              <button aria-label="Replier" className="-mr-1 ml-auto"><ChevronDown className="size-6 text-[#46555f]" /></button>
            </div>
            <div className="mt-1.5 flex">
              {scale.map((s) => (
                <div key={s.label} className="flex-1 border-l border-[#e1e5e6]">
                  <p className="pl-1 text-[10px] leading-3.5 text-[#3d4b55]">{s.label}</p>
                  <div className={`h-[5px] ${s.color}`} />
                </div>
              ))}
            </div>
          </div>

          <button aria-label="Réglages" className="absolute top-[18px] right-[17px] flex size-[34px] items-center justify-center bg-[#46555f] shadow">
            <GearIcon />
          </button>

          <div className="absolute top-[18.500%] left-[9.600%] flex h-4 w-[148px] items-center rounded-sm bg-[#e9f3c0] px-1 text-[9px] font-semibold text-[#3d4b55] shadow-md">
            <svg viewBox="0 0 8 8" className="size-2"><path d="M0 0 8 2 4 4 3 8Z" fill="#35434d" /></svg>
            <span className="ml-1">HP3</span>
            <svg viewBox="0 0 84 12" className="h-3 w-[78px]" stroke="#5a6862" strokeWidth="1" fill="none"><path d="M0 3H22M27 3H36M48 9H80M82 6V10" strokeDasharray="4 2" /></svg>
            <span className="ml-auto size-2.5 shrink-0 rounded-full bg-[#7aab1f]" />
            <svg viewBox="0 0 12 11" className="ml-1 h-[11px] w-3 shrink-0"><path d="M6 0 12 11H0Z" fill="#ff330f" /><path d="M6 4V7M6 8.500V9.500" stroke="#fff" strokeWidth="1.500" /></svg>
          </div>

          <div className="absolute top-[22%] left-[40%] flex rounded-sm bg-[#7aab1f] p-0.5 shadow-md">
            <div className="relative flex w-[46px] items-start pt-[3px] pl-[3px]">
              <span className="rounded-full border-2 border-[#ff330f] bg-white px-1 text-[10px] leading-4 font-bold text-[#35434d]">39,2</span>
              <svg viewBox="0 0 10 10" className="absolute top-4 left-[26px] size-2.5"><circle cx="5" cy="5" r="5" fill="#fff" /><path d="M5 1C7 4 8 5 8 6A3 3 0 0 1 2 6C2 5 3 4 5 1Z" fill="#35434d" /></svg>
            </div>
            <div className="flex h-[35px] items-start rounded-sm bg-white pt-[3px] pr-2.5 pl-1.5 text-[10px] leading-3.5 whitespace-nowrap text-[#35434d]">
              <svg viewBox="0 0 11 8" className="mt-1 mr-2 h-2 w-[11px]"><path d="M0 4 11 0 9 4 11 8Z" fill="#35434d" /></svg>
              <p>17/12 14:16, 30,6 l/100 km<br />-8.6 l/100 km (-22,0 %)</p>
            </div>
          </div>
        </div>
      </div>
    </section>
  );
}

/* ---------------------------------------------------- consumption window */

const days: [string, number, string?][] = [
  ["17/11", 50, "3\u202f815,78"], ["18/11", 41], ["19/11", 43, "3\u202f325,72"], ["20/11", 42], ["21/11", 49, "3\u202f721,16"], ["22/11", 49], ["23/11", 37, "2\u202f815,75"],
  ["24/11", 54, "4\u202f060,76"], ["25/11", 61], ["26/11", 54, "4\u202f108,17"], ["27/11", 44], ["28/11", 53, "3\u202f992,79"], ["29/11", 18, "1\u202f434,43"], ["30/11", 23],
  ["01/12", 38, "2\u202f912,13"], ["02/12", 47], ["03/12", 69, "5\u202f255,76"], ["04/12", 56], ["05/12", 50, "3\u202f735,74"], ["06/12", 35, "2\u202f687,52"], ["07/12", 17, "1\u202f350,09"],
  ["08/12", 36, "2\u202f773,95"], ["09/12", 40], ["10/12", 30, "2\u202f276,91"], ["11/12", 42], ["12/12", 44, "3\u202f363,33"], ["13/12", 33], ["14/12", 26, "2\u202f018,42"],
  ["15/12", 42, "3\u202f211,37"], ["16/12", 27, "2\u202f069,48"], ["17/12", 27],
];
const weeks = [
  { name: "Semaine 47", span: "col-span-7" },
  { name: "Semaine 48", span: "col-span-7" },
  { name: "Semaine 49", span: "col-span-7" },
  { name: "Semaine 50", span: "col-span-7" },
  { name: "Semaine 51", span: "col-span-3" },
];
const vehicles: [string, string][] = [
  ["TT029", "210,60"], ["NY100", "199,31"], ["TT045", "140,10"], ["NY112", "137,46"], ["TT033", "117,45"], ["NR078", "112,90"], ["NR087", "107,16"],
  ["TT036", "102,00"], ["TT037", "101,08"], ["TT040", "100,48"], ["NY114", "99,21"], ["TT035", "93,83"], ["NR086", "81,47"],
];

function Dropdown({ label, icon }: { label: string; icon: React.ReactNode }) {
  return (
    <label className="relative flex h-6 w-[177px] items-center rounded-sm bg-white pl-1.5 text-[#46555f] shadow-[0_0_1px_#9aa5ad]">
      <span className="flex w-[14px] justify-center">{icon}</span>
      <select aria-label={label} className="min-w-0 flex-1 appearance-none bg-transparent pl-[5px] text-[11px] text-[#46555f]">
        <option>{label}</option>
      </select>
      <ChevronDown className="pointer-events-none mr-1.5 size-3" />
    </label>
  );
}

function BackArrow({ className }: { className: string }) {
  return (
    <button aria-label="Précédent" className={`flex items-center bg-[#e1e5e6] pl-[5px] ${className}`}>
      <svg viewBox="0 0 4 6" className="h-1.5 w-1"><path d="M4 0 0 3 4 6Z" fill="#27323a" /></svg>
    </button>
  );
}

function Sum({ value }: { value: string }) {
  return (
    <p className="flex items-center text-[11px] text-[#46555f]">
      <svg viewBox="0 0 10 11" className="mr-[11px] h-[11px] w-2.5" fill="none" stroke="#a3acb3" strokeWidth="1.500"><path d="M9.500 3V1H1L5 5.500 1 10H9.500V8" /></svg>
      {value}
    </p>
  );
}

function ConsumptionWindow() {
  return (
    <section className="absolute top-[452px] right-[112px] left-[47.450%] overflow-hidden border-2 border-black bg-white font-['Open_Sans',sans-serif]">
      <header className="h-[35px] bg-[#46555f] pl-[7px]">
        <h1 className="font-['Inter',sans-serif] text-base leading-[18px] font-bold whitespace-nowrap text-white">CONSOMMATION TOTALE DE CARBURANT</h1>
      </header>

      <div className="flex h-[47px] items-center gap-3 bg-[#f0f2f2] pl-[9px]">
        <Dropdown label="Tous les groupes" icon={<span className="relative block h-3.5 w-3.5"><FaCarSide className="absolute top-0 left-0 size-2.5" /><FaCar className="absolute right-0 bottom-0 size-2.5" /></span>} />
        <Dropdown label="Tous les véhicules" icon={<FaCar className="size-3" />} />
        <div className="-mr-4 ml-auto flex h-6 overflow-hidden rounded-sm bg-[#cfd3d6] text-[11px] text-[#46555f]">
          <button className="w-[63px] bg-[#46555f] font-semibold text-white">Jour</button>
          <button className="w-[62px]">Semaine</button>
          <button className="w-[62px]">Mois</button>
          <button className="w-[62px]">Année</button>
        </div>
      </div>

      <div className="flex h-[30px] items-center gap-[15px] pl-[5px]">
        <h2 className="font-['Inter',sans-serif] text-[12px] font-bold whitespace-nowrap text-[#3d4b55]">TENDANCE QUOTIDIENNE POUR TOUS LES VÉHICULES</h2>
        <Sum value={"97\u202f180,77 l"} />
      </div>

      <div className="-mr-[5px] ml-[5px] pt-1">
        <div className="flex h-3.5">
          <BackArrow className="w-3.5" />
          <div className="grid flex-1 grid-cols-31 text-[10px] leading-3.5 text-[#5b6770]">
            {weeks.map((w) => (
              <span key={w.name} className={`relative ml-0.5 bg-[#e1e5e6] text-center ${w.span}`}>
                <svg viewBox="0 0 8 4" className="absolute -top-1 left-1/2 -ml-1 h-1 w-2"><path d="M4 0 8 4H0Z" fill="#e1e5e6" /></svg>
                {w.name}
              </span>
            ))}
          </div>
        </div>
        <div className="ml-3.5 grid h-[94px] grid-cols-31 border-b border-[#f0f2f2]">
          {days.map(([d, h, label]) => (
            <div key={d} className="flex flex-col items-center justify-end">
              {label && <span className="mb-1 w-12 text-center text-[10px] leading-4 font-semibold whitespace-nowrap text-[#3d4b55]">{label}</span>}
              <div className={d === "17/12" ? "w-[15px] rounded-t-sm bg-[#46555f]" : "w-[13px] rounded-t-sm bg-[#00a2c0]"} style={{ height: h }} />
            </div>
          ))}
        </div>
        <div className="mt-[9px] flex h-[15px]">
          <BackArrow className="w-3.5" />
          <div className="grid flex-1 grid-cols-31 gap-px text-center text-[10px] leading-[15px] text-[#5b6770]">
            {days.map(([d]) => (
              <span key={d} className="bg-[#e1e5e6]">{d}</span>
            ))}
          </div>
        </div>
      </div>

      <div className="mt-[9px] ml-[5px] flex h-[41px] items-center border-t border-[#f0f2f2]">
        <h2 className="mr-[15px] font-['Inter',sans-serif] text-[12px] font-bold whitespace-nowrap text-[#3d4b55]">NOTE POUR AUJOURD’HUI</h2>
        <Sum value={"2\u202f020,51 l"} />
        <div className="ml-auto flex h-[25px] overflow-hidden rounded-sm bg-[#cfd3d6] text-[11px] text-[#5b6770]">
          <button className="w-[63px] bg-[#46555f] font-semibold text-white">Véhicules</button>
          <button className="w-[62px]">Groupes</button>
        </div>
        <div className="-mr-5 ml-[11px] flex h-[25px] overflow-hidden rounded-sm bg-[#cfd3d6]">
          <button aria-label="Tri décroissant" className="flex w-9 items-center justify-center bg-[#46555f]">
            <svg viewBox="0 0 17 12" className="h-3 w-[17px]" stroke="#fff" strokeWidth="2"><path d="M0 1H17M0 6H11M0 10.500H6" /></svg>
          </button>
          <button aria-label="Tri alphabétique" className="flex w-[35px] items-center justify-center">
            <svg viewBox="0 0 17 12" className="h-3 w-[17px]" stroke="#46555f" strokeWidth="2"><path d="M1 1H17M0 6H17M1 10.500H17" /></svg>
          </button>
        </div>
      </div>

      <ul className="mt-[3px] -mb-0.5">
        {vehicles.map(([name, value]) => (
          <li key={name} className="flex h-[19px] items-center text-[10px]">
            <span className="w-[206px] text-right text-[#98a2a9]">{name}</span>
            <div className="ml-3.5 flex flex-1 items-center">
              <div className="h-2.5 rounded-r-full bg-[#00a2c0]" style={{ width: `${parseFloat(value.replace(",", ".")) * 0.4287}%` }} />
              <span className="ml-1 font-semibold text-[#3d4b55]">{value}</span>
            </div>
          </li>
        ))}
      </ul>
    </section>
  );
}

export default function App() {
  return (
    <main className="relative min-h-screen overflow-hidden bg-white pt-[89px] pb-[78px] font-['Inter',sans-serif]">
      <VehicleWindow />
      <ConsumptionWindow />
    </main>
  );
}
